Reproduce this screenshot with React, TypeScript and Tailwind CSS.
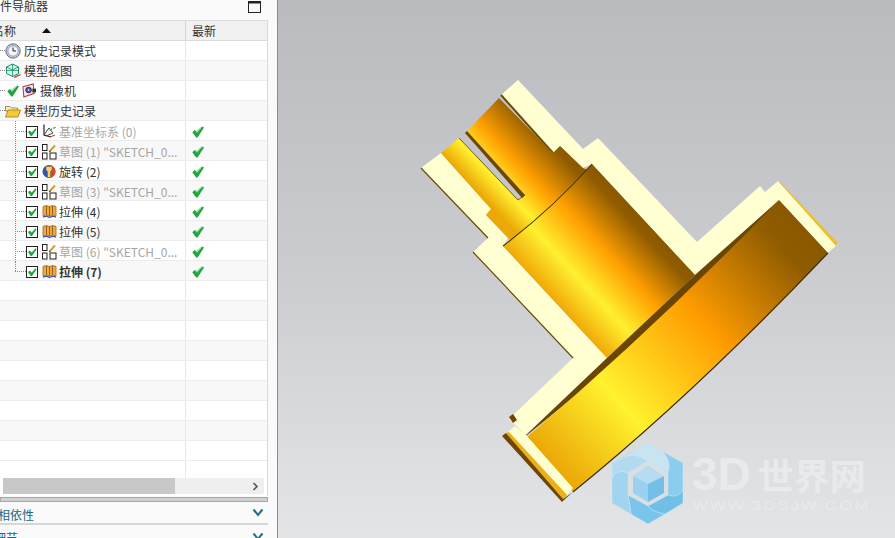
import React from "react";

const Check = () => (
  <svg width="12" height="12" viewBox="0 0 12 12" className="shrink-0">
    <polygon points="0.3,6.2 2.8,4 5,6.4 10.4,0.4 12,1.6 5.6,11.6 4.2,11.6" fill="#25a53f" />
    <polygon points="2.8,4 5,6.4 10.4,0.4 9,0.8 5,4.6" fill="#86e093" />
  </svg>
);

const Box = () => (
  <svg width="12" height="12" viewBox="0 0 12 12" className="shrink-0">
    <rect x="0.5" y="0.5" width="11" height="11" fill="#fff" stroke="#222" />
    <polygon points="2,6 3.8,4.6 5.6,6.4 9.6,2.2 10.6,3.2 6,10 4.6,10" fill="#1fa83f" />
  </svg>
);

const Clock = () => (
  <svg width="16" height="16" viewBox="0 0 16 16" className="shrink-0">
    <circle cx="8" cy="8" r="7.2" fill="#b9c4d4" stroke="#6c7684" />
    <circle cx="8" cy="8" r="5" fill="#f4f6fa" stroke="#8a94a3" strokeWidth="0.6" />
    <path d="M8 4.5V8H11" fill="none" stroke="#222" strokeWidth="1" />
  </svg>
);

const ViewCube = () => (
  <svg width="16" height="16" viewBox="0 0 16 16" className="shrink-0">
    <path d="M7.5 1 L13.5 4 V10.5 L7.5 13.5 L1.5 10.5 V4 Z" fill="#d9f2e6" stroke="#17936e" strokeWidth="1" />
    <path d="M1.5 4 L7.5 7 L13.5 4 M7.5 7 V13.5 M1.5 7.5 H13.5 M7.5 1V7" fill="none" stroke="#17936e" strokeWidth="0.8" />
    <path d="M9 14.5 L15.5 11.5" stroke="#d8553a" strokeWidth="1.4" />
  </svg>
);

const Camera = () => (
  <svg width="15" height="15" viewBox="0 0 16 16" className="shrink-0">
    <path d="M1 4 L12 1 L13 11 L2 15 Z" fill="#f5e8e8" stroke="#a8403c" strokeWidth="1.1" />
    <circle cx="7" cy="7.5" r="3" fill="#5a4aa0" stroke="#2d2a60" />
    <circle cx="7" cy="7.5" r="1" fill="#d8d4f0" />
    <path d="M11 6 H15 V10 H11" fill="#333" />
  </svg>
);

const Folder = () => (
  <svg width="16" height="14" viewBox="0 0 16 14" className="shrink-0">
    <path d="M0.5 2.5 H5 L6.5 4 H12.5 V7 H0.5 Z" fill="#f7eeb6" stroke="#8a7a33" strokeWidth="0.8" />
    <path d="M0.5 13 L3 6 H15.5 L13 13 Z" fill="#f6c83a" stroke="#9a7a1c" strokeWidth="0.8" />
  </svg>
);

const Datum = () => (
  <svg width="15" height="15" viewBox="0 0 15 15" className="shrink-0">
    <path d="M2 0.5 V11 L9 13" fill="none" stroke="#222" strokeWidth="1.2" />
    <path d="M2 11 L7 4 L11 9 L4 12" fill="none" stroke="#444" strokeWidth="1" />
    <path d="M8 6 L14 3" stroke="#3a9a4a" strokeWidth="1.2" strokeDasharray="2.5 1.2" />
    <path d="M8 13 L13 11" stroke="#c24a3a" strokeWidth="1.2" />
  </svg>
);

const Sketch = () => (
  <svg width="15" height="16" viewBox="0 0 15 16" className="shrink-0">
    <rect x="0.5" y="0.5" width="4.5" height="6" fill="#fff" stroke="#222" />
    <rect x="0.5" y="9" width="4.5" height="6" fill="#fff" stroke="#222" />
    <rect x="8" y="9" width="6" height="6" fill="#fff" stroke="#222" />
    <path d="M7.5 7.5 L13 1.5" stroke="#d9a020" strokeWidth="2" />
    <path d="M7 8 L8.5 7" stroke="#333" strokeWidth="1" />
  </svg>
);

const Revolve = () => (
  <svg width="14" height="15" viewBox="0 0 14 15" className="shrink-0">
    <circle cx="7" cy="7.5" r="6.5" fill="#2e55b8" />
    <path d="M7 1 A6.5 6.5 0 0 1 13.5 7.5 A6.5 6.5 0 0 1 7 14 Z" fill="#d84a26" />
    <path d="M4 2.5 H10 V6 L8.5 7.5 V13.5 H5.5 V7.5 L4 6 Z" fill="#f3d27a" stroke="#7a5a20" strokeWidth="0.5" />
  </svg>
);

const Extrude = () => (
  <svg width="15" height="15" viewBox="0 0 15 15" className="shrink-0">
    <path d="M1 2.5 Q4 0.5 7.5 2.5 Q11 0.5 14 2.5 V12 Q11 10.5 7.5 12 Q4 10.5 1 12 Z" fill="#f2a93c" stroke="#a5691c" strokeWidth="0.8" />
    <path d="M4.5 2 V11 M7.5 2.5 V12 M10.5 2 V11" stroke="#8a5a1a" strokeWidth="0.9" />
    <path d="M1 13 Q4 11.6 7.5 13.4 Q11 11.6 14 13" fill="none" stroke="#4a55a8" strokeWidth="1.4" />
  </svg>
);

type Top = { icon: React.ReactNode; label: string; pre?: boolean };
const tops: Top[] = [
  { icon: <Clock />, label: "历史记录模式" },
  { icon: <ViewCube />, label: "模型视图" },
  { icon: <Camera />, label: "摄像机", pre: true },
  { icon: <Folder />, label: "模型历史记录" },
];

type Child = { icon: React.ReactNode; label: string; kind: "grey" | "normal" | "bold" };
const children: Child[] = [
  { icon: <Datum />, label: "基准坐标系 (0)", kind: "grey" },
  { icon: <Sketch />, label: '草图 (1) "SKETCH_0...', kind: "grey" },
  { icon: <Revolve />, label: "旋转 (2)", kind: "normal" },
  { icon: <Sketch />, label: '草图 (3) "SKETCH_0...', kind: "grey" },
  { icon: <Extrude />, label: "拉伸 (4)", kind: "normal" },
  { icon: <Extrude />, label: "拉伸 (5)", kind: "normal" },
  { icon: <Sketch />, label: '草图 (6) "SKETCH_0...', kind: "grey" },
  { icon: <Extrude />, label: "拉伸 (7)", kind: "bold" },
];

function Row({ index, children: c, last, raised }: { index: number; children?: React.ReactNode; last?: React.ReactNode; raised?: boolean }) {
  return (
    <div className={`flex h-5 border-b border-[#ececec] ${index % 2 === 1 ? "bg-[#f8f8f8]" : "bg-white"}`}>
      <div className={`flex w-[186px] shrink-0 items-center border-r border-[#e6e6e6] ${raised ? "" : "pt-0.5"}`}>{c}</div>
      <div className="flex flex-1 items-center pl-[6px] pt-0.5">{last}</div>
    </div>
  );
}

const Chevron = () => (
  <svg width="12" height="9" viewBox="0 0 12 9" className="shrink-0">
    <path d="M1.5 1.5 L6 7 L10.5 1.5" fill="none" stroke="#1f6f8a" strokeWidth="2" />
  </svg>
);

function Model() {
  return (
    <svg viewBox="278 0 617 538" className="block h-full w-full">
      <defs>
        <linearGradient id="gBig" gradientUnits="userSpaceOnUse" x1="503" y1="246" x2="592" y2="164">
          <stop offset="0" stopColor="#f0a808" />
          <stop offset="0.28" stopColor="#fff030" />
          <stop offset="0.6" stopColor="#ff9f00" />
          <stop offset="0.92" stopColor="#905c00" />
          <stop offset="1" stopColor="#8a5800" />
        </linearGradient>
        <linearGradient id="gSmall" gradientUnits="userSpaceOnUse" x1="441" y1="153" x2="512" y2="86">
          <stop offset="0" stopColor="#eca806" />
          <stop offset="0.22" stopColor="#fff030" />
          <stop offset="0.5" stopColor="#ffa000" />
          <stop offset="0.88" stopColor="#8f5b00" />
          <stop offset="1" stopColor="#8a5800" />
        </linearGradient>
        <linearGradient id="gDisc" gradientUnits="userSpaceOnUse" x1="535" y1="470" x2="800" y2="225">
          <stop offset="0" stopColor="#e89a00" />
          <stop offset="0.3" stopColor="#fff22e" />
          <stop offset="0.62" stopColor="#ff9c00" />
          <stop offset="0.92" stopColor="#905c00" />
          <stop offset="1" stopColor="#8a5800" />
        </linearGradient>
      </defs>

      <polygon points="501,95 518,80 583,149 598,138 697,242 760,186 765,192 778,181 838,244 828,253 779,200 695,275 592,164 583,168 560,146 553,153" fill="#ffffd2" />
      <polygon points="421,168 441,153 491,209 486,215 508,238 503,246 607,358 526,435 509,419 573,358 473,252 488,238" fill="#ffffd2" />
      <path d="M421,168 L488,238 M473,252 L573,358" stroke="#6b4a08" strokeWidth="1.2" fill="none" />
      <path d="M501,95 L553,153" stroke="#6b4a08" strokeWidth="2" fill="none" />

      <polygon points="499,98 553,153 560,146 583,168 592,172 515,245 508,238 486,215 491,209 441,153 459,138 518,200 525,195 467,131" fill="url(#gSmall)" />
      <polygon points="467,131 465,133 522,198 525,195" fill="#6e4704" />
      <path d="M459,138 L518,200 L525,195" fill="none" stroke="#5c4006" strokeWidth="0.8" />

      <path d="M503,246 Q552,209 592,164 L695,275 L607,358 Z" fill="url(#gBig)" />
      <path d="M503,246 Q552,209 592,164" fill="none" stroke="#4a3404" strokeWidth="1.1" />

      <path d="M526,435 L607,358 L695,275 L779,200 Q700,286 640,342 Q580,392 526,436 Z" fill="#6a4504" />
      <path d="M527,437 Q655,328 779,200 L828,253 Q694,394 573,492 Z" fill="url(#gDisc)" />
      <path d="M828,253 Q694,394 573,492" fill="none" stroke="#3d2c04" strokeWidth="1.2" />

      <polygon points="778,181 780,182 838,243 836,246" fill="#efc024" />
      <polygon points="508,432 515,426 526,435 573,488 567,495" fill="#ffffd2" />
      <polygon points="506,433 509,432 567,495 563,499" fill="#eeb012" />
      <polygon points="502,436 506,433 563,499 573,492 564,500 562,502" fill="#6e4704" />
      <polygon points="509,417 513,414 517,420 513,423" fill="#6e4704" />

      <g>
        <polygon points="648,443 683,463 683,503 648,524 612,503 612,463" fill="#a9d6ef" />
        <path d="M625,457 L648,443 L663,452 Q672,462 670,478 L668,473 L648,461 Q635,452 625,457 Z" fill="#c9e4f1" stroke="#dcecf4" strokeWidth="0.4" />
        <path d="M663,452 L683,463 L683,490 Q680,500 668,495 L668,473 Q672,462 663,452 Z" fill="#8ccdee" stroke="#dcecf4" strokeWidth="0.4" />
        <path d="M683,490 L683,503 L665,514 Q652,512 648,506 L668,495 Q678,499 683,490 Z" fill="#6fbfe8" stroke="#dcecf4" strokeWidth="0.4" />
        <path d="M628,495 L648,506 Q652,512 665,514 L648,524 L631,514 Q630,505 628,495 Z" fill="#79c5ec" stroke="#dcecf4" strokeWidth="0.4" />
        <path d="M612,503 L612,478 Q618,468 628,473 L628,495 Q630,505 631,514 Z" fill="#a2d3ef" stroke="#dcecf4" strokeWidth="0.4" />
        <path d="M612,463 L625,457 Q635,452 648,461 L628,473 Q618,468 612,478 Z" fill="#b2dbf1" stroke="#dcecf4" strokeWidth="0.4" />
        <polygon points="648,461 668,473 668,495 648,506 628,495 628,473" fill="#d9dfe3" />
        <polygon points="648,465 664,476 648,484 633,476" fill="#b6dcf2" />
        <polygon points="633,476 648,484 648,502 633,493" fill="#9bd0ef" />
        <polygon points="664,476 648,484 648,502 664,493" fill="#73bfe9" />
      </g>
    </svg>
  );
}

export default function App() {
  const font = { fontFamily: '"Noto Sans CJK SC", "Noto Sans", sans-serif' };
  return (
    <div className="flex h-[538px] w-[895px] overflow-hidden bg-white text-[12px] leading-none text-[#333]" style={font}>
      <aside className="flex w-[278px] shrink-0 flex-col overflow-hidden border-r border-[#8c8c8c] bg-[#fafafa]">
        <div className="flex h-5 shrink-0 items-start justify-between overflow-hidden pr-4">
          <span className="-ml-3 whitespace-nowrap leading-[12px]">部件导航器</span>
          <svg width="13" height="13" viewBox="0 0 13 13" className="mt-px">
            <rect x="0.5" y="0.5" width="12" height="11" fill="none" stroke="#222" />
            <rect x="0.5" y="0.5" width="12" height="2" fill="#222" />
          </svg>
        </div>

        <div className="flex w-[268px] flex-col border-r border-[#d9d9d9] bg-white">
          <div className="flex h-[21px] items-center border-y border-[#dcdcdc] bg-[#f1f1f1]">
            <div className="flex h-full w-[186px] shrink-0 items-center overflow-hidden border-r border-[#d5d5d5]">
              <span className="-ml-2 whitespace-nowrap">名称</span>
              <svg width="9" height="5" viewBox="0 0 9 5" className="ml-[26px]">
                <polygon points="4.5,0 9,5 0,5" fill="#111" />
              </svg>
            </div>
            <span className="pl-[6px]">最新</span>
          </div>

          {tops.map((t, i) => (
            <Row key={t.label} index={i} raised>
              <span className="w-[5px] shrink-0 border-t border-dotted border-[#888]" />
              {t.pre ? (
                <span className="ml-0.5 flex items-center gap-[3px]">
                  <Check />
                  {t.icon}
                  <span className="whitespace-nowrap">{t.label}</span>
                </span>
              ) : (
                <span className="flex items-center gap-[3px] whitespace-nowrap">
                  {t.icon}
                  <span>{t.label}</span>
                </span>
              )}
            </Row>
          ))}

          {children.map((c, i) => {
            const color = c.kind === "grey" ? "text-[#a6a6a6]" : "text-[#333]";
            const weight = c.kind === "bold" ? "font-bold" : "";
            return (
              <Row key={c.label + i} index={i + 4} last={<Check />}>
                <span className="relative -mt-0.5 ml-[15px] h-[20px] w-[11px] shrink-0">
                  <span className={`absolute left-0 top-0 border-l border-dotted border-[#888] ${i === children.length - 1 ? "h-1/2" : "h-[21px]"}`} />
                  <span className="absolute left-0 top-1/2 w-full border-t border-dotted border-[#888]" />
                </span>
                <Box />
                <span className="ml-[3px] flex w-[16px] shrink-0 justify-center">{c.icon}</span>
                <span className={`ml-[2px] whitespace-nowrap ${color} ${weight}`}>{c.label}</span>
              </Row>
            );
          })}

          {Array.from({ length: 9 }).map((_, i) => (
            <Row key={i} index={i + 12} />
          ))}
          <div className="flex h-[35px] flex-col">
            <div className="flex h-[17px] shrink-0">
              <div className="w-[186px] border-r border-[#e6e6e6]" />
            </div>
            <div className="mx-[3px] flex h-[16px] shrink-0 items-center justify-between bg-[#efefef] pr-[5px]">
              <div className="h-full w-[172px] bg-[#c8c8c8]" />
              <svg width="7" height="9" viewBox="0 0 7 9">
                <path d="M1.5 1 L5 4.5 L1.5 8" fill="none" stroke="#555" strokeWidth="1.6" />
              </svg>
            </div>
          </div>
        </div>

        <div className="mt-[1px] h-[5px] w-[268px] shrink-0 border border-[#a8a8a8] bg-[#d0d0d0]" />
        <div className="flex h-[23px] w-[268px] shrink-0 items-center justify-between overflow-hidden border-b-2 border-[#d6d6d6] pr-[4px] text-[#24657a]">
          <span className="-ml-0.5 mt-1 whitespace-nowrap">相依性</span>
          <Chevron />
        </div>
        <div className="flex h-[13px] w-[268px] shrink-0 items-start justify-between overflow-hidden pr-[4px] pt-[7px] text-[#24657a]">
          <span className="-ml-1.5 whitespace-nowrap">细节</span>
          <Chevron />
        </div>
      </aside>

      <main className="relative min-w-0 flex-1 bg-gradient-to-b from-[#b9bbbe] via-[#cbcccf] to-[#e4e5e7]">
        <Model />
        <div className="absolute left-[414px] top-[450px] flex w-[182px] flex-col text-[#e9eaec]">
          <span className="flex items-baseline whitespace-nowrap font-bold" style={{ fontFamily: '"Liberation Sans", "Noto Sans CJK SC", sans-serif' }}>
            <span className="text-[46px] leading-[48px]">3D</span>
            <span className="ml-[7px] text-[36px] leading-[48px]" style={{ fontFamily: '"Noto Sans CJK SC", sans-serif' }}>世界网</span>
          </span>
          <span className="mt-[3px] origin-left scale-x-[1.4] whitespace-nowrap text-[12px] leading-[11px] tracking-[1.5px]" style={{ fontFamily: '"Liberation Sans", sans-serif' }}>
            WWW.3DSJW.COM
          </span>
        </div>
      </main>
    </div>
  );
}
